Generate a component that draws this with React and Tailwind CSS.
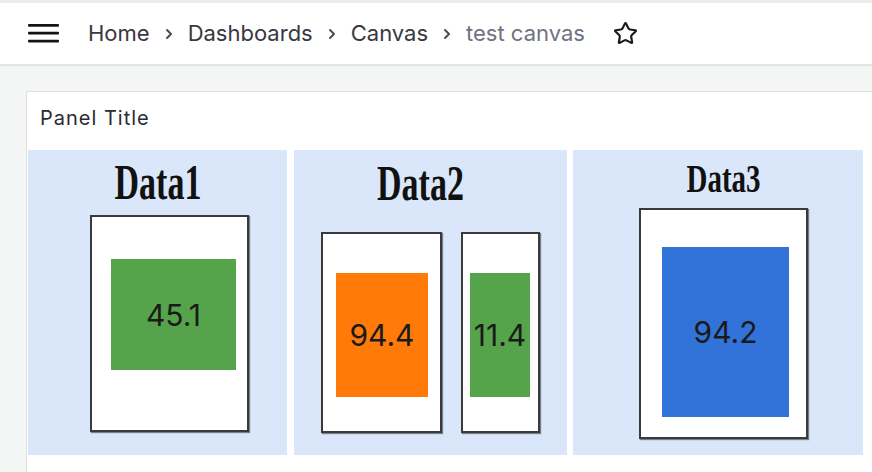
import React from "react";
import { Star } from "lucide-react";

function Chevron() {
  return (
    <svg width="10" height="12" viewBox="0 0 10 12" className="shrink-0">
      <path d="M3 2 L7 6 L3 10" fill="none" stroke="#4b4b55" strokeWidth="2" strokeLinecap="round" strokeLinejoin="round" />
    </svg>
  );
}

function Title({ text, cx, top, size, scale }) {
  return (
    <div
      className="absolute flex justify-center whitespace-nowrap font-bold leading-none text-[#111]"
      style={{
        left: cx - 80,
        width: 160,
        top,
        height: size,
        fontSize: size,
        fontFamily: '"Liberation Serif", "Times New Roman", serif',
        transform: `scaleY(${scale})`,
      }}
    >
      {text}
    </div>
  );
}

function Box({ left, top, w, h, ileft, itop, iw, ih, color, value }) {
  return (
    <div
      className="absolute border-2 border-[#3a3a3a] bg-white shadow-[1px_1px_1px_rgba(0,0,0,0.45)]"
      style={{ left, top, width: w, height: h }}
    >
      <div
        className="absolute flex items-center justify-center text-[30px] leading-none text-[#1a1a1a]"
        style={{ left: ileft - 2, top: itop - 2, width: iw, height: ih, backgroundColor: color, fontFamily: "Inter, sans-serif" }}
      >
        {value}
      </div>
    </div>
  );
}

export default function App() {
  return (
    <div className="w-[872px] h-[472px] overflow-hidden bg-[#f4f5f5]" style={{ fontFamily: "Inter, sans-serif" }}>
      <header className="h-[66px] border-t-[3px] border-b-2 border-t-[#ebebeb] border-b-[#e4e6e6] bg-white flex items-center pl-[28px]">
        <svg width="31" height="19" viewBox="0 0 31 19" className="shrink-0">
          <rect x="0" y="0" width="31" height="2.8" rx="1" fill="#141414" />
          <rect x="0" y="7.8" width="31" height="2.8" rx="1" fill="#141414" />
          <rect x="0" y="15.8" width="31" height="2.8" rx="1" fill="#141414" />
        </svg>
        <nav className="ml-[29px] flex items-center gap-[14px] text-[22px] text-[#383842]">
          <span>Home</span>
          <Chevron />
          <span>Dashboards</span>
          <Chevron />
          <span>Canvas</span>
          <Chevron />
          <span className="text-[#6f7282]">test canvas</span>
        </nav>
        <Star size={25} strokeWidth={2.1} className="ml-[28px] text-[#1a1a1a]" />
      </header>

      <div className="ml-[26px] mt-[25px] w-[860px] h-[400px] border border-[#dfe1e1] bg-white">
        <div className="h-[58px] flex items-center pl-[13px] pb-[6px] text-[20px] tracking-[1px] text-[#2a2a33]">Panel Title</div>
        <div className="flex gap-[7px] pl-px">
          <div className="relative w-[259px] h-[305px] bg-[#dae7fa]">
            <Title text="Data1" cx={130} top={15.5} size={34} scale={1.47} />
            <Box left={62} top={65} w={159} h={217} ileft={21} itop={44} iw={125} ih={111} color="#55a44b" value="45.1" />
          </div>
          <div className="relative w-[273px] h-[305px] bg-[#dae7fa]">
            <Title text="Data2" cx={126.5} top={16.5} size={34} scale={1.47} />
            <Box left={27} top={82} w={121} h={201} ileft={15} itop={41} iw={92} ih={124} color="#ff7a09" value="94.4" />
            <Box left={167} top={82} w={79} h={201} ileft={9} itop={41} iw={60} ih={124} color="#55a44b" value="11.4" />
          </div>
          <div className="relative w-[290px] h-[305px] bg-[#dae7fa] -ml-px">
            <Title text="Data3" cx={150.5} top={14} size={29} scale={1.41} />
            <Box left={66} top={58} w={169} h={231} ileft={23} itop={39} iw={127} ih={170} color="#3273d9" value="94.2" />
          </div>
        </div>
      </div>
    </div>
  );
}
